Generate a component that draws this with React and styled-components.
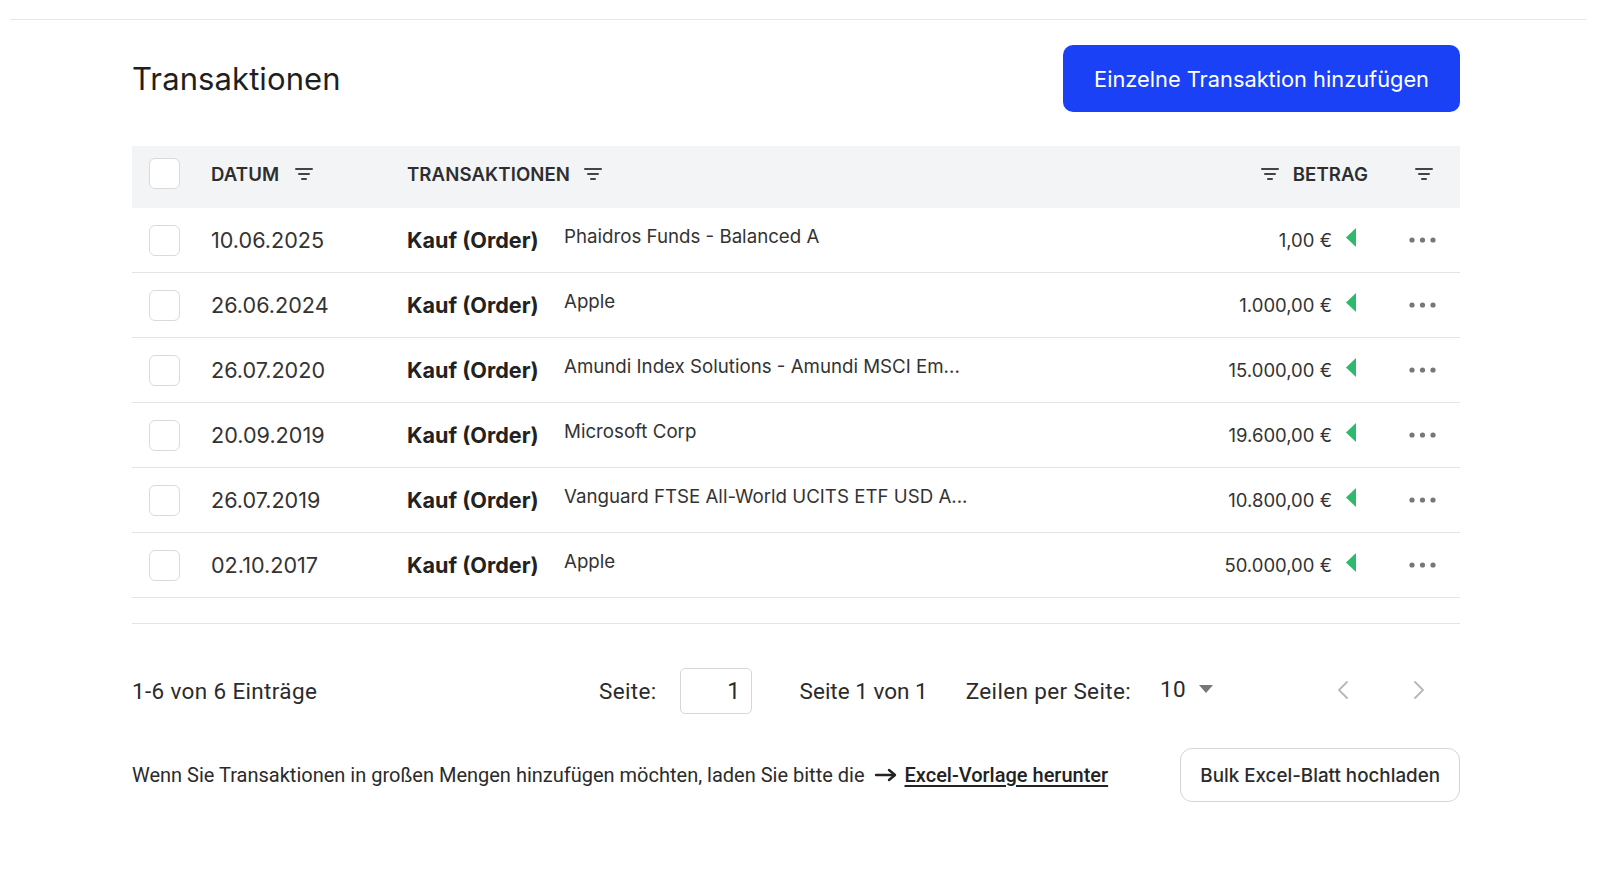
import React from 'react';
import styled, { createGlobalStyle } from 'styled-components';

const GlobalStyle = createGlobalStyle`
  html, body {
    margin: 0;
    padding: 0;
    background: #fff;
  }
  body {
    font-family: Inter, "Noto Sans", "Liberation Sans", sans-serif;
    color: #2b2b2b;
  }
`;

const transactions = [
  { date: '10.06.2025', type: 'Kauf (Order)', name: 'Phaidros Funds - Balanced A', amount: '1,00 €' },
  { date: '26.06.2024', type: 'Kauf (Order)', name: 'Apple', amount: '1.000,00 €' },
  { date: '26.07.2020', type: 'Kauf (Order)', name: 'Amundi Index Solutions - Amundi MSCI Em...', amount: '15.000,00 €' },
  { date: '20.09.2019', type: 'Kauf (Order)', name: 'Microsoft Corp', amount: '19.600,00 €' },
  { date: '26.07.2019', type: 'Kauf (Order)', name: 'Vanguard FTSE All-World UCITS ETF USD A...', amount: '10.800,00 €' },
  { date: '02.10.2017', type: 'Kauf (Order)', name: 'Apple', amount: '50.000,00 €' },
];

const Page = styled.div`
  padding-top: 19px;
  min-height: 878px;
  box-sizing: border-box;
`;

const Divider = styled.div`
  height: 1px;
  margin: 0 16px 0 10px;
  background: #e6e7ea;
`;

const Content = styled.main`
  width: 1328px;
  margin-left: 132px;
`;

const HeaderBar = styled.header`
  display: flex;
  align-items: center;
  justify-content: space-between;
  margin-top: 25px;
`;

const Title = styled.h1`
  margin: 0;
  font-size: 31px;
  font-weight: 400;
  color: #1f1f1f;
  letter-spacing: 0.1px;
`;

const PrimaryButton = styled.button`
  height: 67px;
  padding: 0 31px;
  border: none;
  border-radius: 10px;
  background: #1a41f5;
  color: #fff;
  font-family: inherit;
  font-size: 21.8px;
  font-weight: 400;
  cursor: pointer;
`;

const Table = styled.div`
  margin-top: 34px;
  padding-bottom: 25px;
  border-bottom: 1px solid #e3e4e7;
`;

const Row = styled.div`
  display: grid;
  grid-template-columns: 79px 196px 157px 1fr 200px 60px 68px;
  align-items: center;
  box-sizing: border-box;
  height: ${({ $head }) => ($head ? '62px' : '65px')};
  padding-bottom: ${({ $head }) => ($head ? '7px' : '0')};
  background: ${({ $head }) => ($head ? '#f3f4f6' : '#fff')};
  border-bottom: ${({ $head }) => ($head ? 'none' : '1px solid #e3e4e7')};
`;

const CheckCell = styled.div`
  padding-left: 17px;
  display: flex;
`;

const Checkbox = styled.span`
  display: block;
  width: 31px;
  height: 31px;
  box-sizing: border-box;
  border: 1px solid #d9dadd;
  border-radius: 6px;
  background: #fff;
`;

const HeadCell = styled.div`
  display: flex;
  align-items: center;
  gap: ${({ $gap }) => $gap || 14}px;
  grid-column: ${({ $span }) => $span || 'auto'};
  justify-content: ${({ $end }) => ($end ? 'flex-end' : 'flex-start')};
  padding-right: ${({ $end }) => ($end ? '24px' : '0')};
  padding-left: ${({ $pl }) => $pl || 0}px;
  font-size: 18.6px;
  font-weight: 600;
  color: #2e2e2e;
  text-transform: uppercase;
  letter-spacing: 0.1px;
`;

const DateCell = styled.div`
  font-size: 21.6px;
  color: #333;
`;

const TypeCell = styled.div`
  font-size: 21.6px;
  font-weight: 700;
  color: #222;
`;

const NameCell = styled.div`
  font-size: 18.7px;
  color: #333;
  margin-bottom: 7px;
  white-space: nowrap;
`;

const AmountCell = styled.div`
  text-align: right;
  font-size: 18.5px;
  color: #333;
`;

const TrendCell = styled.div`
  padding-left: 14px;
  display: flex;
  align-items: center;
  margin-bottom: 5px;
`;

const ActionCell = styled.div`
  padding-left: 17px;
  display: flex;
  align-items: center;
`;

const Pagination = styled.div`
  display: flex;
  align-items: center;
  height: 46px;
  margin-top: 44px;
  padding-right: 25px;
  font-family: Roboto, "Liberation Sans", sans-serif;
  font-size: 22.5px;
  letter-spacing: 0.35px;
  color: #2b2b2b;
`;

const Summary = styled.div`
  flex: 1;
`;

const PageInput = styled.div`
  width: 72px;
  height: 46px;
  margin-left: 23px;
  box-sizing: border-box;
  border: 1px solid #d6d7da;
  border-radius: 5px;
  display: flex;
  align-items: center;
  justify-content: flex-end;
  padding-right: 10px;
  font-size: 23px;
`;

const Text = styled.span`
  margin-left: ${({ $ml }) => $ml || 0}px;
  letter-spacing: ${({ $tight }) => ($tight ? '0' : 'inherit')};
`;

const Select = styled.div`
  display: flex;
  align-items: center;
  gap: 13px;
  margin-left: 29px;
  margin-bottom: 4px;
`;

const NavGroup = styled.div`
  display: flex;
  gap: 44px;
  margin-left: 114px;
  margin-bottom: 2px;
`;

const NavButton = styled.button`
  width: 32px;
  height: 32px;
  padding: 0;
  border: none;
  background: none;
  display: flex;
  align-items: center;
  justify-content: center;
`;

const Footer = styled.div`
  display: flex;
  align-items: center;
  justify-content: space-between;
  margin-top: 34px;
`;

const Hint = styled.p`
  margin: 0;
  font-family: Roboto, "Liberation Sans", sans-serif;
  font-size: 20px;
  color: #2b2b2b;
  display: flex;
  align-items: center;
`;

const Arrow = styled.span`
  display: flex;
  margin: 0 8px 0 10px;
`;

const TemplateLink = styled.a`
  color: #222;
  font-weight: 500;
  text-decoration: underline;
  text-underline-offset: 3px;
`;

const SecondaryButton = styled.button`
  height: 54px;
  padding: 0 19px;
  border: 1px solid #d4d5d8;
  border-radius: 12px;
  background: #fff;
  font-family: inherit;
  font-size: 18.8px;
  font-weight: 500;
  color: #2b2b2b;
`;

const FilterIcon = () => (
  <svg width="18" height="12" viewBox="0 0 18 12">
    <rect x="0" y="0" width="18" height="2" rx="1" fill="#444" />
    <rect x="3" y="5" width="12" height="2" rx="1" fill="#444" />
    <rect x="6" y="10" width="6" height="2" rx="1" fill="#444" />
  </svg>
);

const TrendIcon = () => (
  <svg width="10" height="19" viewBox="0 0 10 19">
    <polygon points="10,0 10,19 0,9.5" fill="#2dba6c" />
  </svg>
);

const DotsIcon = () => (
  <svg width="27" height="6" viewBox="0 0 27 6">
    <circle cx="3" cy="3" r="2.6" fill="#777" />
    <circle cx="13.5" cy="3" r="2.6" fill="#777" />
    <circle cx="24" cy="3" r="2.6" fill="#777" />
  </svg>
);

const Caret = () => (
  <svg width="14" height="8" viewBox="0 0 14 8">
    <polygon points="0,0 14,0 7,8" fill="#777" />
  </svg>
);

const Chevron = ({ dir }) => (
  <svg width="10" height="18" viewBox="0 0 10 18">
    <polyline
      points={dir === 'left' ? '9,1 1,9 9,17' : '1,1 9,9 1,17'}
      fill="none"
      stroke="#b8b8b8"
      strokeWidth="1.8"
      strokeLinecap="round"
      strokeLinejoin="round"
    />
  </svg>
);

const LongArrow = () => (
  <svg width="22" height="14" viewBox="0 0 22 14">
    <line x1="1" y1="7" x2="19" y2="7" stroke="#222" strokeWidth="2.4" strokeLinecap="round" />
    <polyline points="14,2 20,7 14,12" fill="none" stroke="#222" strokeWidth="2.4" strokeLinecap="round" strokeLinejoin="round" />
  </svg>
);

const App = () => (
  <Page>
    <GlobalStyle />
    <Divider />
    <Content>
      <HeaderBar>
        <Title>Transaktionen</Title>
        <PrimaryButton>Einzelne Transaktion hinzufügen</PrimaryButton>
      </HeaderBar>

      <Table>
        <Row $head>
          <CheckCell><Checkbox /></CheckCell>
          <HeadCell $gap={16}>Datum <FilterIcon /></HeadCell>
          <HeadCell $span="3 / 5">Transaktionen <FilterIcon /></HeadCell>
          <HeadCell $span="5 / 7" $end>
            <FilterIcon /> Betrag
          </HeadCell>
          <HeadCell $pl={23}><FilterIcon /></HeadCell>
        </Row>
        {transactions.map((t) => (
          <Row key={t.date + t.name}>
            <CheckCell><Checkbox /></CheckCell>
            <DateCell>{t.date}</DateCell>
            <TypeCell>{t.type}</TypeCell>
            <NameCell>{t.name}</NameCell>
            <AmountCell>{t.amount}</AmountCell>
            <TrendCell><TrendIcon /></TrendCell>
            <ActionCell><DotsIcon /></ActionCell>
          </Row>
        ))}
      </Table>

      <Pagination>
        <Summary>1-6 von 6 Einträge</Summary>
        <Text>Seite:</Text>
        <PageInput>1</PageInput>
        <Text $ml={48} $tight>Seite 1 von 1</Text>
        <Text $ml={38}>Zeilen per Seite:</Text>
        <Select>
          <span>10</span>
          <Caret />
        </Select>
        <NavGroup>
          <NavButton><Chevron dir="left" /></NavButton>
          <NavButton><Chevron dir="right" /></NavButton>
        </NavGroup>
      </Pagination>

      <Footer>
        <Hint>
          Wenn Sie Transaktionen in großen Mengen hinzufügen möchten, laden Sie bitte die
          <Arrow><LongArrow /></Arrow>
          <TemplateLink href="#">Excel-Vorlage herunter</TemplateLink>
        </Hint>
        <SecondaryButton>Bulk Excel-Blatt hochladen</SecondaryButton>
      </Footer>
    </Content>
  </Page>
);

export default App;
